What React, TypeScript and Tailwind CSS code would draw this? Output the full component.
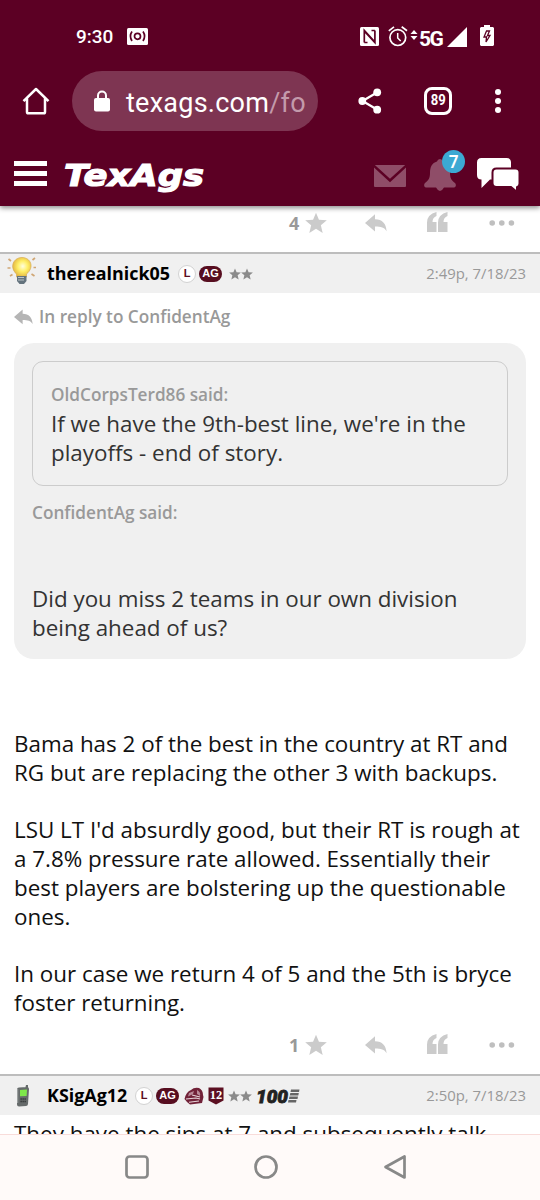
import React from "react";

const STAR = "M12 .8l3.200 7.600 8.600.7-6.500 5.400 2 8.300L12 18.400l-7.300 4.400 2-8.300L.2 9.100l8.600-.7z";

function Star({ className }: { className: string }) {
  return (
    <svg viewBox="0 0 24 24" className={className} fill="currentColor">
      <path d={STAR} />
    </svg>
  );
}

function ReplyArrow({ className }: { className: string }) {
  return (
    <svg viewBox="0 0 22 18" className={className} fill="currentColor">
      <path d="M0 9L10 .3v5c7.500.2 11 4.200 11.600 11.900-2.300-3.800-5.600-4.700-11.600-4.700v5z" />
    </svg>
  );
}

function StatusBar() {
  return (
    <div className="flex h-[71px] items-start pt-[25px] pl-[76px] text-white">
      <span className="w-[51px] font-[Roboto] text-[19px] leading-6 font-medium">9:30</span>
      <svg viewBox="0 0 21 17" className="mt-[3px] h-[17px] w-[21px]">
        <rect width="21" height="17" rx="1.500" fill="#fff" />
        <g fill="none" stroke="#5c0024" strokeWidth="1.700">
          <circle cx="10.500" cy="8.300" r="3" />
          <path d="M5 3.600Q1.800 8.300 5 13M16 3.600Q19.200 8.300 16 13" />
        </g>
      </svg>
      <svg viewBox="0 0 19 19" className="mt-[2px] ml-[212px] h-[19px] w-[19px]">
        <rect width="19" height="19" rx="1.500" fill="#fff" />
        <path d="M4.300 15.500V3.500L14.500 14.600M14.900 3.500v12L4.600 4.400" fill="none" stroke="#5c0024" strokeWidth="1.700" />
        <path d="M4.300 15.500H7.500M11.500 3.500h3.400" stroke="#5c0024" strokeWidth="1.400" />
      </svg>
      <svg viewBox="0 0 20 21" className="mt-px ml-[9px] h-[21px] w-5" fill="none" stroke="#fff">
        <circle cx="9.800" cy="11.600" r="7.900" strokeWidth="1.700" />
        <path d="M9.700 7v5l3 3" strokeWidth="1.500" />
        <path d="M.8 4.800L6 .8M13.700.8L19 4.800" strokeWidth="1.700" />
      </svg>
      <svg viewBox="0 0 8 10" className="mt-[5px] ml-[2px] h-[10px] w-2" fill="#fff">
        <path d="M.5 4L4 0l3.500 4zM.5 6L4 10l3.500-4z" />
      </svg>
      <span className="ml-px w-[26px] pt-px font-[Roboto] text-[21px] leading-[27px] font-bold tracking-[-1.500px]">5G</span>
      <svg viewBox="0 0 20 20" className="mt-[2px] ml-[2px] h-5 w-5" fill="#fff">
        <path d="M0 20L20 0v20z" />
      </svg>
      <svg viewBox="0 0 14 21" className="ml-[13px] h-[21px] w-[14px]">
        <path d="M4 0h6v2h3l1 1v17l-1 1H1l-1-1V3l1-1h3z" fill="#fff" />
        <path d="M6.500 6L4 12h2.500L6 17l4-6.500H7.500L9.500 6z" fill="none" stroke="#5c0024" strokeWidth="1.300" />
      </svg>
    </div>
  );
}

function BrowserBar() {
  return (
    <div className="flex h-[60px] items-center pl-[22px] text-white">
      <svg viewBox="0 0 28 28" className="h-7 w-7" fill="none" stroke="#fff" strokeWidth="2.500" strokeLinejoin="round">
        <path d="M1.500 14.200L14 2l12.500 12.200M5 11.500V25q0 1.300 1.300 1.300h15.400q1.300 0 1.300-1.300V11.500" />
      </svg>
      <div className="ml-[22px] flex h-[60px] w-[246px] items-center rounded-full bg-[#7e3552] pl-[21px]">
        <svg viewBox="0 0 18 22" className="mb-[1px] h-[22px] w-[18px]">
          <path d="M5 9V5.500a4 4 0 018 0V9" fill="none" stroke="#fff" strokeWidth="2" />
          <rect x="1" y="8" width="16" height="13.500" rx="2" fill="#fff" />
        </svg>
        <span className="mt-[3px] ml-[15px] font-[Roboto] text-[27px] leading-8 tracking-[0.25px] whitespace-nowrap">
          texags.com<span className="text-[#c39aab]">/fo</span>
        </span>
      </div>
      <svg viewBox="0 0 24 26" className="ml-[40px] h-[26px] w-6" fill="#fff">
        <path d="M19 4.500L4.500 13 19 21.500" fill="none" stroke="#fff" strokeWidth="2.300" />
        <circle cx="19.200" cy="4.300" r="3.900" />
        <circle cx="4.300" cy="13" r="3.900" />
        <circle cx="19.200" cy="21.700" r="3.900" />
      </svg>
      <div className="ml-[42px] flex h-7 w-7 items-center justify-center rounded-[8px] border-[3px] border-white font-[Roboto] text-[14.500px] font-bold">
        <span className="scale-x-90">89</span>
      </div>
      <svg viewBox="0 0 6 26" className="ml-[43px] h-[26px] w-[6px]" fill="#fff">
        <circle cx="3" cy="4" r="3" />
        <circle cx="3" cy="13" r="3" />
        <circle cx="3" cy="22" r="3" />
      </svg>
    </div>
  );
}

function SiteHeader() {
  return (
    <div className="flex h-[75px] items-start">
      <div className="mt-[30px] ml-[14px] flex w-[33px] flex-col gap-[5px]">
        <i className="h-[5px] bg-white" />
        <i className="h-[5px] bg-white" />
        <i className="h-[5px] bg-white" />
      </div>
      <svg viewBox="0 0 150 40" className="mt-[24px] ml-[17px] h-10 w-[150px] overflow-visible">
        <text
          x="0"
          y="30.500"
          textLength="140"
          lengthAdjust="spacingAndGlyphs"
          fill="#fff"
          stroke="#fff"
          strokeWidth="1.200"
          fontFamily="'DejaVu Sans', sans-serif"
          fontSize="31"
          fontWeight="700"
          fontStyle="italic"
        >
          TexAgs
        </text>
      </svg>
      <svg viewBox="0 0 32 22" className="mt-[34px] ml-[160px] h-[22px] w-8">
        <rect width="32" height="22" rx="1" fill="#8f4d68" />
        <path d="M-1 0L16 15.500 33 0" fill="none" stroke="#5c0024" strokeWidth="2.500" />
      </svg>
      <div className="relative mt-[19px] ml-[18px] h-[44px] w-8">
        <svg viewBox="0 0 32 34" className="mt-[9px] h-[34px] w-8" fill="#8f4d68">
          <path d="M16 0q2.500 0 3 2.500c5 1.500 7 5.500 7 11.500 0 5 1.500 7.500 5 10 1.500 1.500 1 4.500-1 4.500H20q-4 7-8 0H2c-2 0-2.500-3-1-4.500 3.500-2.500 5-5 5-10 0-6 2-10 7-11.500Q13.500 0 16 0z" />
        </svg>
        <span className="absolute top-0 left-[18px] flex h-[23px] w-[23px] items-center justify-center rounded-full bg-[#3ca9d3] font-['Noto_Sans'] text-[17px] font-semibold text-white">
          7
        </span>
      </div>
      <svg viewBox="0 0 44 36" className="mt-[26px] ml-[20px] h-9 w-11">
        <path d="M5.500 1h25q4.500 0 4.500 4.500V18q0 4.500-4.500 4.500H14L5.500 31V22.500Q1 22.500 1 18V5.500Q1 1 5.500 1z" fill="#fff" />
        <path d="M20.500 11.500h19q4 0 4 4v11q0 3-2.500 3.700V35l-6-5H20.500q-4 0-4-4V15.500q0-4 4-4z" fill="#fff" stroke="#5c0024" strokeWidth="2" />
      </svg>
    </div>
  );
}

function Actions({ count, className }: { count: string; className: string }) {
  return (
    <div className={"flex items-start text-[#cbcbcb] " + className}>
      <span className="ml-[289px] w-[16px] text-[18px] leading-6 font-bold text-[#999]">{count}</span>
      <Star className="mt-px h-[22px] w-[22px]" />
      <ReplyArrow className="mt-[3px] ml-[38px] h-[18px] w-[22px]" />
      <svg viewBox="0 0 21 20" className="mt-[1px] ml-[40px] h-5 w-[21px]" fill="currentColor">
        <path d="M9.500 0v4Q5.500 5.500 5.500 10h4v10H0V10.500Q0 2.500 9.500 0zM20.500 0v4q-4 1.500-4 6h4v10H11V10.500Q11 2.500 20.500 0z" />
      </svg>
      <svg viewBox="0 0 26 6" className="mt-[9px] ml-[41px] h-[6px] w-[26px]" fill="#bfbfbf">
        <circle cx="3.200" cy="3" r="2.800" />
        <circle cx="12.800" cy="3" r="2.800" />
        <circle cx="22.400" cy="3" r="2.800" />
      </svg>
    </div>
  );
}

function Bulb() {
  return (
    <svg viewBox="0 0 30 30" className="h-[30px] w-[30px]">
      <defs>
        <radialGradient id="glow" cx=".55" cy=".45" r=".6">
          <stop offset="0" stopColor="#fffde0" />
          <stop offset=".45" stopColor="#ffef67" />
          <stop offset="1" stopColor="#dfae3c" />
        </radialGradient>
      </defs>
      <path d="M1.500 3L4 5M.5 12h3M3 20l2.500-1.500M25.500 4L28 2M26.500 11.500H29M24.500 18l3 2" stroke="#d0a674" strokeWidth="1.700" />
      <path d="M9.500 18C2 11 6.500 1.500 15 1.500S28 11 19.500 18v3h-10z" fill="url(#glow)" stroke="#d8ac54" strokeWidth=".7" />
      <path d="M10 20h9.500v5L17 28h-4.500L10 25z" fill="#64737d" />
      <path d="M11 21.500h6M11 24h6" stroke="#bac3c7" strokeWidth="1.200" />
    </svg>
  );
}

function Phone() {
  return (
    <svg viewBox="0 0 14 22" className="h-[22px] w-[14px]">
      <path d="M10 0h2v4H9zM3 2.500l8-.5q2 0 2 2l-1 15q-.2 2-2 2l-7 .5q-2 0-2-2v-15q0-2 2-2z" fill="#666b6b" />
      <path d="M1.700 4v14" stroke="#a7aaaa" />
      <path d="M4 5l7-.5-.4 6.500-6.600.3z" fill="#7ee84a" />
      <path d="M4.500 14h5.500M4.500 16.500h5.500" stroke="#313535" strokeWidth="1.500" strokeDasharray="1.300 .7" />
    </svg>
  );
}

function Badges() {
  return (
    <>
      <span className="flex h-[18px] w-[18px] items-center justify-center rounded-full border border-[#d2d2d2] bg-white font-['Liberation_Sans'] text-[11px] font-bold text-[#5c1022]">
        L
      </span>
      <span className="ml-[3px] flex h-[16px] w-[23px] items-center justify-center rounded-full bg-[#570e20] font-['Liberation_Sans'] text-[11px] font-bold text-white">
        AG
      </span>
    </>
  );
}

function RankStars({ className }: { className: string }) {
  return (
    <span className={"flex text-[#8b8b8b] " + className}>
      <Star className="h-[12px] w-[12px]" />
      <Star className="h-[12px] w-[12px]" />
    </span>
  );
}

function PostBar({ children, time }: { children: React.ReactNode; time: string }) {
  return (
    <div className="flex h-[41px] items-center border-t-2 border-[#bdbdbd] bg-[#f0f0f0] pr-[14px]">
      {children}
      <span className="ml-auto text-[14.900px] text-[#999]">{time}</span>
    </div>
  );
}

export default function App() {
  return (
    <div className="flex h-[1200px] w-[540px] flex-col overflow-hidden bg-white font-['Open_Sans',sans-serif]">
      <header className="relative z-10 h-[206px] shrink-0 bg-[#5c0024] shadow-[0_2px_5px_rgba(0,0,0,0.45)]">
        <StatusBar />
        <BrowserBar />
        <SiteHeader />
      </header>
      <main className="flex h-[928px] shrink-0 flex-col overflow-hidden">
        <Actions count="4" className="h-[46px] shrink-0 pt-[5px]" />
        <article className="h-[822px] shrink-0">
          <PostBar time="2:49p, 7/18/23">
            <span className="mb-[5px] ml-[7px] w-[39px]"><Bulb /></span>
            <b className="w-[132px] pl-px text-[17.900px] whitespace-nowrap">therealnick05</b>
            <Badges />
            <RankStars className="ml-[7px]" />
          </PostBar>
          <div className="flex h-[50px] items-center pb-[2px] pl-[14px] text-[17.200px] font-semibold text-[#999]">
            <ReplyArrow className="h-[16px] w-[19px] text-[#b5b5b5]" />
            <span className="ml-[6px]">In reply to ConfidentAg</span>
          </div>
          <section className="mx-[14px] h-[316px] rounded-[20px] bg-[#f0f0f0] px-[18px] pt-[18px] text-[22.400px] leading-[28.800px] text-[#333]">
            <div className="h-[125px] rounded-[11px] border border-[#ccc] px-[18px] pt-[19px]">
              <div className="text-[17.200px] font-semibold text-[#999]">OldCorpsTerd86 said:</div>
              <p className="whitespace-nowrap">If we have the 9th-best line, we're in the<br />playoffs - end of story.</p>
            </div>
            <div className="mt-[13px] text-[17.200px] font-semibold text-[#999]">ConfidentAg said:</div>
            <p className="mt-[57.300px] whitespace-nowrap">Did you miss 2 teams in our own division<br />being ahead of us?</p>
          </section>
          <div className="mt-[71px] pl-[14px] text-[22.400px] leading-[28.800px] whitespace-nowrap text-[#111]">
            <p>Bama has 2 of the best in the country at RT and<br />RG but are replacing the other 3 with backups.</p>
            <p className="mt-[28.800px]">LSU LT I'd absurdly good, but their RT is rough at<br />a 7.8% pressure rate allowed. Essentially their<br />best players are bolstering up the questionable<br />ones.</p>
            <p className="mt-[28.800px]">In our case we return 4 of 5 and the 5th is bryce<br />foster returning.</p>
          </div>
          <Actions count="1" className="pt-[15px]" />
        </article>
        <article className="shrink-0">
          <PostBar time="2:50p, 7/18/23">
            <span className="ml-[16px] w-[30px]"><Phone /></span>
            <b className="w-[89px] pl-px text-[17.900px] whitespace-nowrap">KSigAg12</b>
            <Badges />
            <svg viewBox="0 0 20 18" className="ml-[5px] h-[18px] w-5">
              <path d="M.5 12Q2 5 7 3q3-3 8-2 4 2 4 7 1 2 0 4l-1 4-12 1.500L3 15z" fill="#712238" />
              <path d="M5 6l5-2-1 3-5 2.500zM13 3q4 2 3 6l-3-2z" fill="#b98a98" />
              <path d="M2 12l10-1 4 1M5 15.300l10-1.300M8 8l4 1 4 1" fill="none" stroke="#e8d7db" strokeWidth="1.100" />
            </svg>
            <svg viewBox="0 0 16 18" className="ml-[4px] h-[18px] w-4">
              <path d="M.5.5h15v13L8 17.500.5 13.500z" fill="#5c1022" />
              <text x="8" y="12" textAnchor="middle" fill="#fff" fontFamily="'Liberation Serif', serif" fontWeight="700" fontSize="12.500">12</text>
            </svg>
            <RankStars className="ml-[4px]" />
            <svg viewBox="0 0 43 16" className="ml-[5px] h-4 w-[43px] overflow-visible">
              <text x="-1" y="14.700" textLength="32" lengthAdjust="spacingAndGlyphs" fill="#222" stroke="#222" strokeWidth=".8" fontFamily="Roboto, sans-serif" fontWeight="900" fontStyle="italic" fontSize="18.500">100</text>
              <path d="M34 1.500h8.500L42 4h-8.500zM33.300 5h8.500l-.5 2.500h-8.500zM32.500 8.500H41l-.5 2.500H32zM31.500 12h8l-.5 2.500h-8z" fill="#666" />
            </svg>
          </PostBar>
          <p className="pt-[5px] pl-[14px] text-[22.400px] leading-[28.800px] whitespace-nowrap text-[#111]">They have the sips at 7 and subsequently talk</p>
        </article>
      </main>
      <nav className="flex h-[66px] shrink-0 items-center border-t border-[#f8dcda] bg-[#fffaf9] pb-[2px] pl-[125px]">
        <svg viewBox="0 0 24 24" className="h-6 w-6" fill="none" stroke="#888" strokeWidth="2.700">
          <rect x="1.500" y="1.500" width="21" height="21" rx="3" />
        </svg>
        <svg viewBox="0 0 24 24" className="ml-[105px] h-6 w-6" fill="none" stroke="#888" strokeWidth="2.700">
          <circle cx="12" cy="12" r="10.500" />
        </svg>
        <svg viewBox="0 0 24 26" className="ml-[105px] h-[26px] w-6" fill="none" stroke="#888" strokeWidth="2.700" strokeLinejoin="round">
          <path d="M21.500 2.500v21L2.500 13z" />
        </svg>
      </nav>
    </div>
  );
}
